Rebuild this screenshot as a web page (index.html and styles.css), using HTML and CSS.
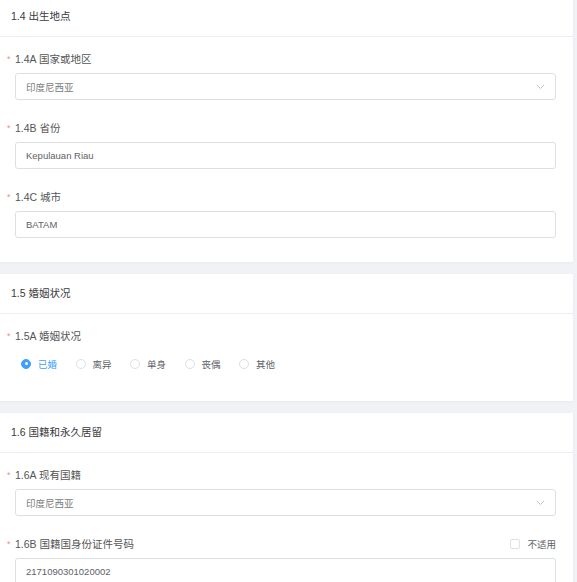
FILE: index.html
```
<!DOCTYPE html>
<html lang="zh">
<head>
    <meta charset="UTF-8">
    <meta name="viewport" content="width=device-width, initial-scale=1.0">
    <link rel="stylesheet" href="styles.css">
</head>
<body>
    <div class="page">
        <section class="card card-first">
            <div class="card-header">1.4 出生地点</div>
            <div class="card-body">
                <div class="field">
                    <div class="field-label"><span class="req">*</span>1.4A 国家或地区</div>
                    <div class="select-box">
                        <span class="select-text">印度尼西亚</span>
                        <svg class="chevron" width="9" height="6" viewBox="0 0 9 6"><path d="M1 1 L4.5 4.5 L8 1" fill="none" stroke="#c0c4cc" stroke-width="1"/></svg>
                    </div>
                </div>
                <div class="field">
                    <div class="field-label"><span class="req">*</span>1.4B 省份</div>
                    <input class="text-input" type="text" value="Kepulauan Riau">
                </div>
                <div class="field">
                    <div class="field-label"><span class="req">*</span>1.4C 城市</div>
                    <input class="text-input" type="text" value="BATAM">
                </div>
            </div>
        </section>

        <section class="card">
            <div class="card-header">1.5 婚姻状况</div>
            <div class="card-body">
                <div class="field">
                    <div class="field-label"><span class="req">*</span>1.5A 婚姻状况</div>
                    <div class="radio-group">
                        <label class="radio checked"><span class="radio-dot"></span>已婚</label>
                        <label class="radio"><span class="radio-dot"></span>离异</label>
                        <label class="radio"><span class="radio-dot"></span>单身</label>
                        <label class="radio"><span class="radio-dot"></span>丧偶</label>
                        <label class="radio"><span class="radio-dot"></span>其他</label>
                    </div>
                </div>
            </div>
        </section>

        <section class="card">
            <div class="card-header">1.6 国籍和永久居留</div>
            <div class="card-body">
                <div class="field">
                    <div class="field-label"><span class="req">*</span>1.6A 现有国籍</div>
                    <div class="select-box">
                        <span class="select-text">印度尼西亚</span>
                        <svg class="chevron" width="9" height="6" viewBox="0 0 9 6"><path d="M1 1 L4.5 4.5 L8 1" fill="none" stroke="#c0c4cc" stroke-width="1"/></svg>
                    </div>
                </div>
                <div class="field">
                    <div class="field-label label-row">
                        <span><span class="req">*</span>1.6B 国籍国身份证件号码</span>
                        <label class="check"><span class="check-box"></span>不适用</label>
                    </div>
                    <input class="text-input" type="text" value="2171090301020002">
                </div>
            </div>
        </section>
    </div>
</body>
</html>
```

FILE: styles.css
```
body {
    margin: 0;
    background-color: #f0f2f5;
    font-family: "Liberation Sans", "Noto Sans CJK SC", sans-serif;
    color: #303133;
    overflow: hidden;
}
.page {
    width: 573px;
}
.card {
    background-color: #fff;
    margin-bottom: 12px;
    box-shadow: 0 1px 3px rgba(0,0,0,0.04);
}
.card-first {
    margin-top: -3px;
}
.card-header {
    height: 39px;
    line-height: 39px;
    padding: 0 11px;
    border-bottom: 1px solid #ebeef5;
    font-size: 10.5px;
    color: #3a3a3a;
}
.card-body {
    padding: 14px 17px 24px 15px;
}
.field {
    margin-bottom: 20px;
}
.field:last-child {
    margin-bottom: 0;
}
.field-label {
    position: relative;
    height: 16px;
    line-height: 17px;
    margin-bottom: 6px;
    font-size: 10.5px;
    color: #555;
}
.req {
    position: absolute;
    left: -8px;
    top: 0;
    color: #f78989;
    font-size: 9px;
}
.label-row {
    display: flex;
    justify-content: space-between;
    align-items: center;
}
.text-input,
.select-box {
    box-sizing: border-box;
    display: block;
    width: 100%;
    height: 27px;
    padding: 0 10px;
    border: 1px solid #dcdfe6;
    border-radius: 3px;
    background: #fff;
    font-family: inherit;
    font-size: 9.5px;
    color: #606266;
    outline: none;
}
.select-box {
    display: flex;
    align-items: center;
    justify-content: space-between;
}
.select-text {
    color: #7a7c80;
}
.radio-group {
    display: flex;
    align-items: center;
    height: 27px;
    padding-left: 6px;
}
.radio {
    display: flex;
    align-items: center;
    margin-right: 18.5px;
    font-size: 9.5px;
    color: #606266;
}
.radio-dot {
    box-sizing: border-box;
    width: 10px;
    height: 10px;
    margin-right: 7px;
    border: 1px solid #dcdfe6;
    border-radius: 50%;
    background: #fff;
}
.radio.checked {
    color: #409eff;
}
.radio.checked .radio-dot {
    border-color: #409eff;
    background: #409eff;
    position: relative;
}
.radio.checked .radio-dot::after {
    content: "";
    position: absolute;
    left: 2.5px;
    top: 2.5px;
    width: 3px;
    height: 3px;
    border-radius: 50%;
    background: #fff;
}
.check {
    display: flex;
    align-items: center;
    font-size: 9.5px;
    color: #606266;
}
.check-box {
    box-sizing: border-box;
    width: 10px;
    height: 10px;
    margin-right: 7px;
    border: 1px solid #dcdfe6;
    border-radius: 2px;
    background: #fff;
}
```
